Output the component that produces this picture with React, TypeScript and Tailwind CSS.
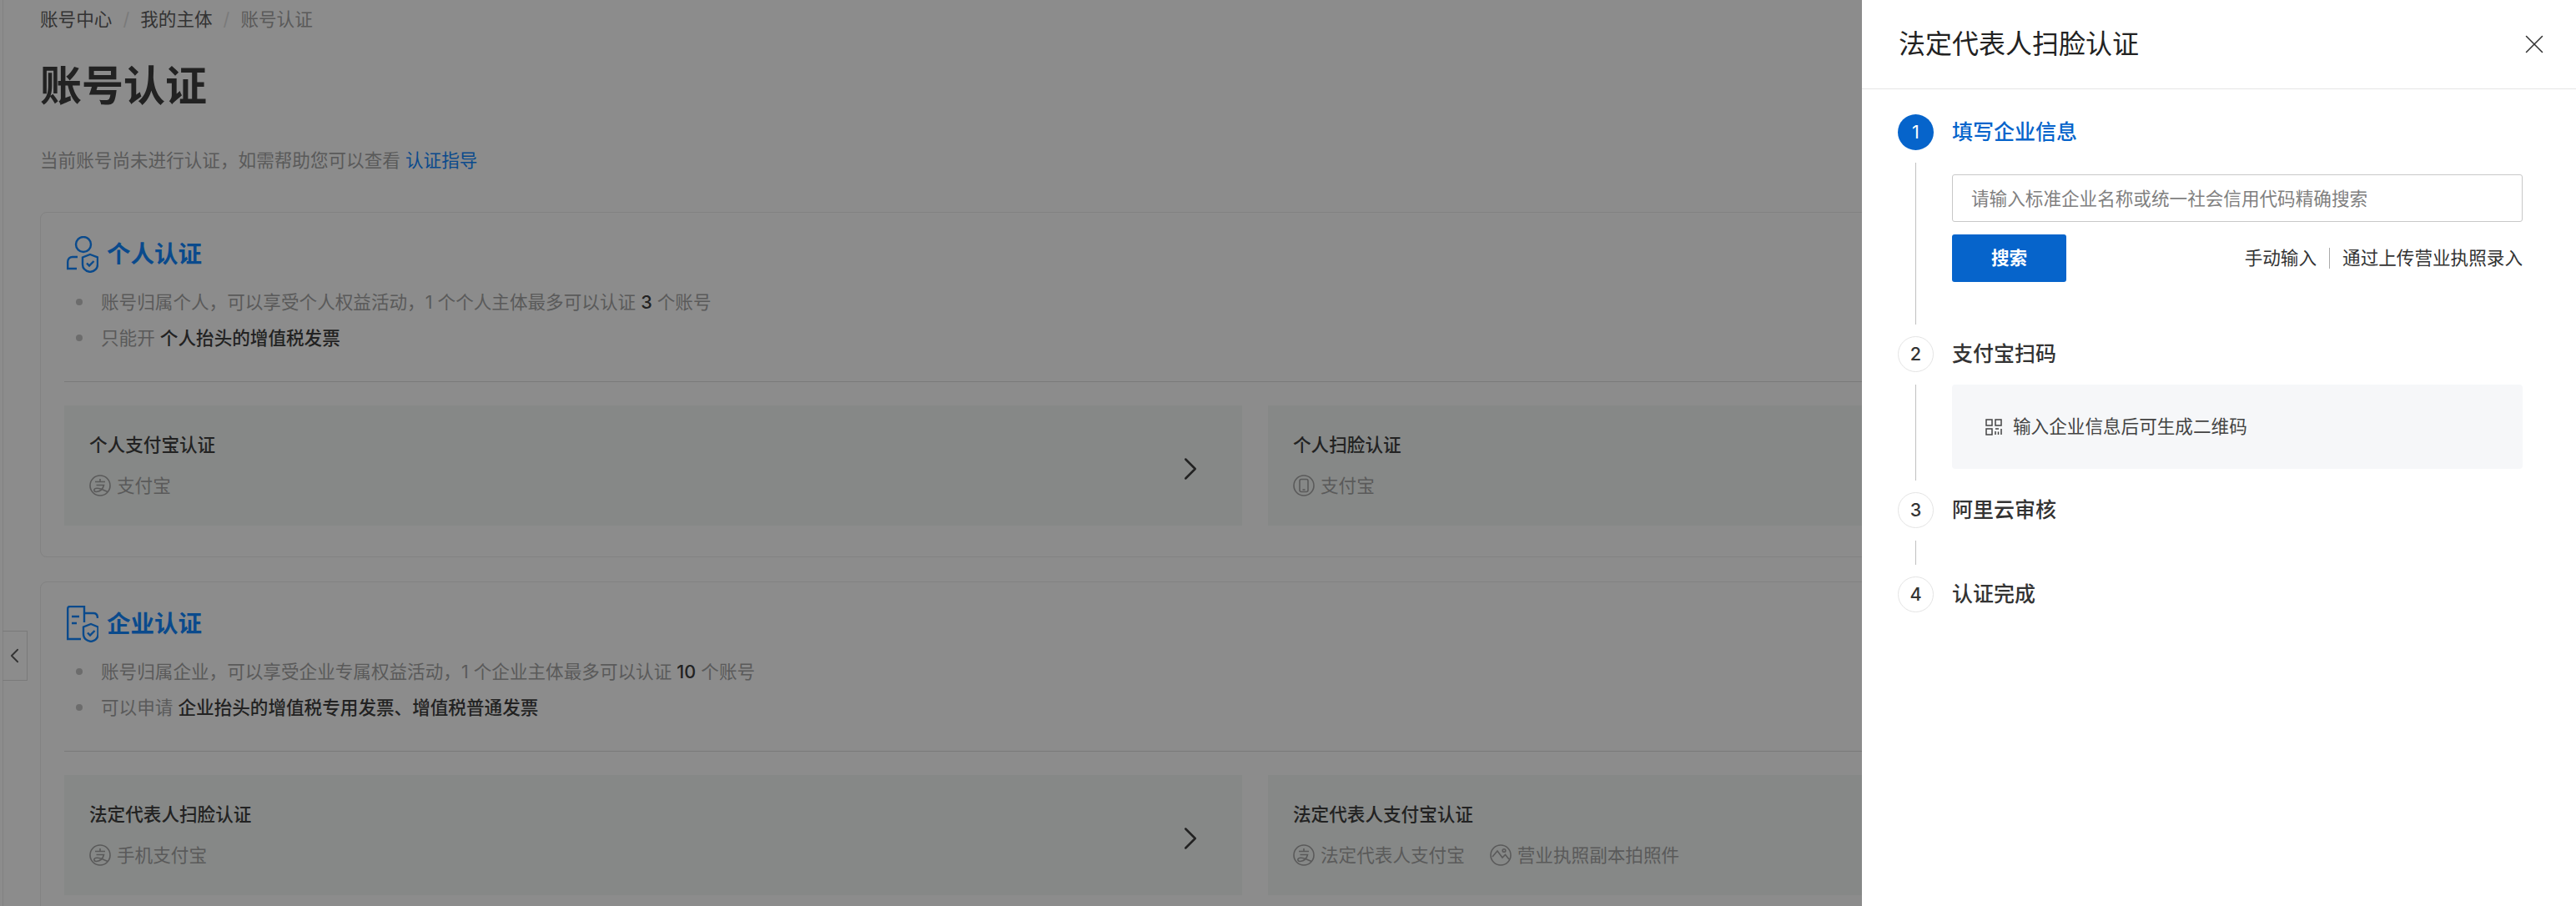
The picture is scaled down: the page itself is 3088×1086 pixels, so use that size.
import React from 'react';
import { ChevronLeft, ChevronRight, X } from 'lucide-react';

const AlipayIcon = () => (
  <svg width="26" height="26" viewBox="0 0 26 26" fill="none" stroke="#5a5a5a" strokeWidth="1.6" className="shrink-0">
    <circle cx="13" cy="13" r="12" />
    <path d="M7 8.5H19M13 5V8.5M8.5 12.5H17.5C16.5 17 13 20 8.5 20.5C6 20.5 5 18.5 6.5 17C9 15 15 17 22 20.5" />
  </svg>
);

const PhoneIcon = () => (
  <svg width="26" height="26" viewBox="0 0 26 26" fill="none" stroke="#5a5a5a" strokeWidth="1.6" className="shrink-0">
    <circle cx="13" cy="13" r="12" />
    <rect x="8" y="5.5" width="10" height="15" rx="2" />
    <path d="M11.5 18H14.5" />
  </svg>
);

const PhotoIcon = () => (
  <svg width="26" height="26" viewBox="0 0 26 26" fill="none" stroke="#5a5a5a" strokeWidth="1.6" className="shrink-0">
    <circle cx="13" cy="13" r="12" />
    <path d="M3 15L9 8L15 16L18.5 12.5L23 18" />
    <circle cx="17" cy="7.5" r="1.8" />
  </svg>
);

const PersonShieldIcon = () => (
  <svg width="38" height="44" viewBox="0 0 38 44" fill="none" stroke="#0a4a8c" strokeWidth="2.4" className="shrink-0">
    <circle cx="20" cy="10" r="9" />
    <path d="M13 25H7C3.5 25 1.2 27.5 1.2 31V39H12" />
    <path d="M28 22L37 25.5V34C37 39 33 42 28 43C23 42 19 39 19 34V25.5Z" />
    <path d="M24 32.5L27 35.5L32.5 30" />
  </svg>
);

const BuildingShieldIcon = () => (
  <svg width="38" height="44" viewBox="0 0 38 44" fill="none" stroke="#0a4a8c" strokeWidth="2.4" className="shrink-0">
    <path d="M17 40H1.2V4C1.2 2 2.5 1 4 1H21V20" />
    <path d="M21 9H32C35 9 37 11 37 15" />
    <path d="M6 13H15M6 21H12" />
    <path d="M29 22L37.5 25.5V34C37.5 39 34 42 29 43C24 42 20 39 20 34V25.5Z" />
    <path d="M25 32.5L28 35.5L33.5 30" />
  </svg>
);

const QrIcon = () => (
  <svg width="20" height="20" viewBox="0 0 20 20" fill="none" stroke="#444444" strokeWidth="1.5" className="shrink-0">
    <rect x="1" y="1" width="7" height="7" />
    <rect x="12" y="1" width="7" height="7" />
    <rect x="1" y="12" width="7" height="7" />
    <path d="M12 12H16M12 15V19M15.5 15.5V19M19 12V19" />
  </svg>
);

type Method = { icon: React.ReactNode; label: string };

const MethodCard = ({ title, methods, arrow }: { title: string; methods: Method[]; arrow?: boolean }) => (
  <div className="flex h-[144px] items-center justify-between bg-[#868887] pl-[30px] pr-[39px]">
    <div className="mb-[2px]">
      <div className="text-[21.6px] leading-[30px] font-medium text-[#222222]">{title}</div>
      <div className="mt-[19px] flex items-center gap-[30px]">
        {methods.map((m, key) => (
          <div key={key} className="flex items-center gap-[7px] text-[21.6px] leading-[30px] text-[#5a5a5a]">
            {m.icon}
            <span>{m.label}</span>
          </div>
        ))}
      </div>
    </div>
    {arrow && <ChevronRight size={46} strokeWidth={1.3} color="#222222" className="mt-2" />}
  </div>
);

const Bullet = ({ children }: { children: React.ReactNode }) => (
  <div className="flex items-center text-[21.6px] leading-[30px] text-[#5a5a5a]">
    <span className="mr-[22px] ml-[14px] h-2 w-2 rounded-full bg-[#6c6c6c]" />
    <span>{children}</span>
  </div>
);

const Section = ({
  icon,
  title,
  bullets,
  cards,
}: {
  icon: React.ReactNode;
  title: string;
  bullets: React.ReactNode[];
  cards: React.ReactNode;
}) => (
  <div className="rounded-lg border border-[#828282] px-7 pt-7 pb-[37px]">
    <div className="flex h-11 items-center gap-[10px] pl-[3px]">
      {icon}
      <span className="text-[28.5px] font-semibold text-[#0a4a8c]">{title}</span>
    </div>
    <div className="mt-5 flex flex-col gap-[13px]">
      {bullets.map((b, key) => (
        <Bullet key={key}>{b}</Bullet>
      ))}
    </div>
    <div className="mt-[37px] mb-7 h-px bg-[#7a7a7a]" />
    <div className="grid grid-cols-2 gap-[31px]">{cards}</div>
  </div>
);

const Strong = ({ children }: { children: React.ReactNode }) => (
  <span className="font-medium text-[#222222]">{children}</span>
);

const Step = ({
  num,
  title,
  active,
  last,
  className,
  children,
}: {
  num: number;
  title: string;
  active?: boolean;
  last?: boolean;
  className?: string;
  children?: React.ReactNode;
}) => (
  <div className="flex gap-[22px]">
    <div className="flex w-[43px] shrink-0 flex-col items-center">
      <div
        className={
          active
            ? 'flex h-[43px] w-[43px] items-center justify-center rounded-full bg-[#0664cb] text-[21.6px] text-white'
            : 'flex h-[43px] w-[43px] items-center justify-center rounded-full border border-[#e4e4e4] text-[21.6px] font-medium text-[#333333]'
        }
      >
        {num}
      </div>
      {!last && <div className="mt-[15px] mb-[14px] w-px flex-1 bg-[#c0c0c0]" />}
    </div>
    <div className={`min-w-0 flex-1 ${className ?? ''}`}>
      <div className={`text-[25px] leading-[43px] font-medium ${active ? 'text-[#0664cb]' : 'text-[#333333]'}`}>
        {title}
      </div>
      {children}
    </div>
  </div>
);

const App = () => {
  return (
    <div className="relative flex h-[1086px] w-[3088px] overflow-hidden bg-white font-['Inter','Noto_Sans_CJK_SC',sans-serif]">
      <div className="relative w-[2232px] shrink-0 overflow-hidden bg-[#8c8c8c]">
        <div className="ml-[3px] h-full w-[2958px] border-l border-[#828282] pt-2 pl-11">
          <div className="flex items-center gap-[13px] text-[21.6px] leading-[30px]">
            <span className="text-[#333333]">账号中心</span>
            <span className="text-[#7a7a7a]">/</span>
            <span className="text-[#333333]">我的主体</span>
            <span className="text-[#7a7a7a]">/</span>
            <span className="text-[#5a5a5a]">账号认证</span>
          </div>
          <h1 className="mt-[35px] text-[50px] leading-[60px] font-semibold text-[#222222]">账号认证</h1>
          <p className="mt-[44px] text-[21.6px] leading-[30px] text-[#5a5a5a]">
            当前账号尚未进行认证，如需帮助您可以查看 <span className="text-[#0a4a8c]">认证指导</span>
          </p>

          <div className="mt-[47px] flex flex-col gap-[29px]">
            <Section
              icon={<PersonShieldIcon />}
              title="个人认证"
              bullets={[
                <>
                  账号归属个人，可以享受个人权益活动，1 个个人主体最多可以认证 <Strong>3</Strong> 个账号
                </>,
                <>
                  只能开 <Strong>个人抬头的增值税发票</Strong>
                </>,
              ]}
              cards={
                <>
                  <MethodCard title="个人支付宝认证" arrow methods={[{ icon: <AlipayIcon />, label: '支付宝' }]} />
                  <MethodCard title="个人扫脸认证" methods={[{ icon: <PhoneIcon />, label: '支付宝' }]} />
                </>
              }
            />
            <Section
              icon={<BuildingShieldIcon />}
              title="企业认证"
              bullets={[
                <>
                  账号归属企业，可以享受企业专属权益活动，1 个企业主体最多可以认证 <Strong>10</Strong> 个账号
                </>,
                <>
                  可以申请 <Strong>企业抬头的增值税专用发票、增值税普通发票</Strong>
                </>,
              ]}
              cards={
                <>
                  <MethodCard title="法定代表人扫脸认证" arrow methods={[{ icon: <AlipayIcon />, label: '手机支付宝' }]} />
                  <MethodCard
                    title="法定代表人支付宝认证"
                    methods={[
                      { icon: <AlipayIcon />, label: '法定代表人支付宝' },
                      { icon: <PhotoIcon />, label: '营业执照副本拍照件' },
                    ]}
                  />
                </>
              }
            />
          </div>
        </div>
        <div className="absolute top-[756px] left-[3px] flex h-[60px] w-[30px] items-center justify-center border border-l-0 border-[#7a7a7a]">
          <ChevronLeft size={32} strokeWidth={1.5} color="#333333" />
        </div>
      </div>

      <div className="flex-1 bg-white">
        <div className="flex h-[107px] items-center justify-between border-b border-[#e5e5e5] pr-[31px] pl-11">
          <span className="text-[32px] text-[#222222]">法定代表人扫脸认证</span>
          <X size={38} strokeWidth={1} color="#333333" />
        </div>
        <div className="pt-[30px] pr-16 pl-[43px]">
          <Step num={1} title="填写企业信息" active className="pb-[65px]">
            <input
              placeholder="请输入标准企业名称或统一社会信用代码精确搜索"
              className="mt-[29px] h-[57px] w-full rounded-[3px] border border-[#c8c8c8] px-[22px] text-[21.6px] outline-none placeholder:text-[#808080]"
            />
            <div className="mt-[15px] flex items-center justify-between">
              <button className="h-[57px] w-[137px] rounded-[3px] bg-[#0664cb] text-[21.6px] font-bold text-white">搜索</button>
              <div className="flex items-center text-[21.6px] text-[#333333]">
                <span>手动输入</span>
                <span className="mx-[15px] h-[25px] w-px bg-[#aaaaaa]" />
                <span>通过上传营业执照录入</span>
              </div>
            </div>
          </Step>
          <Step num={2} title="支付宝扫码" className="pb-7">
            <div className="mt-[15px] flex h-[101px] items-center gap-[13px] rounded bg-[#f6f7f9] pl-10 text-[21.6px] text-[#444444]">
              <QrIcon />
              <span>输入企业信息后可生成二维码</span>
            </div>
          </Step>
          <Step num={3} title="阿里云审核" className="pb-[58px]" />
          <Step num={4} title="认证完成" last />
        </div>
      </div>
    </div>
  );
};

export default App;
